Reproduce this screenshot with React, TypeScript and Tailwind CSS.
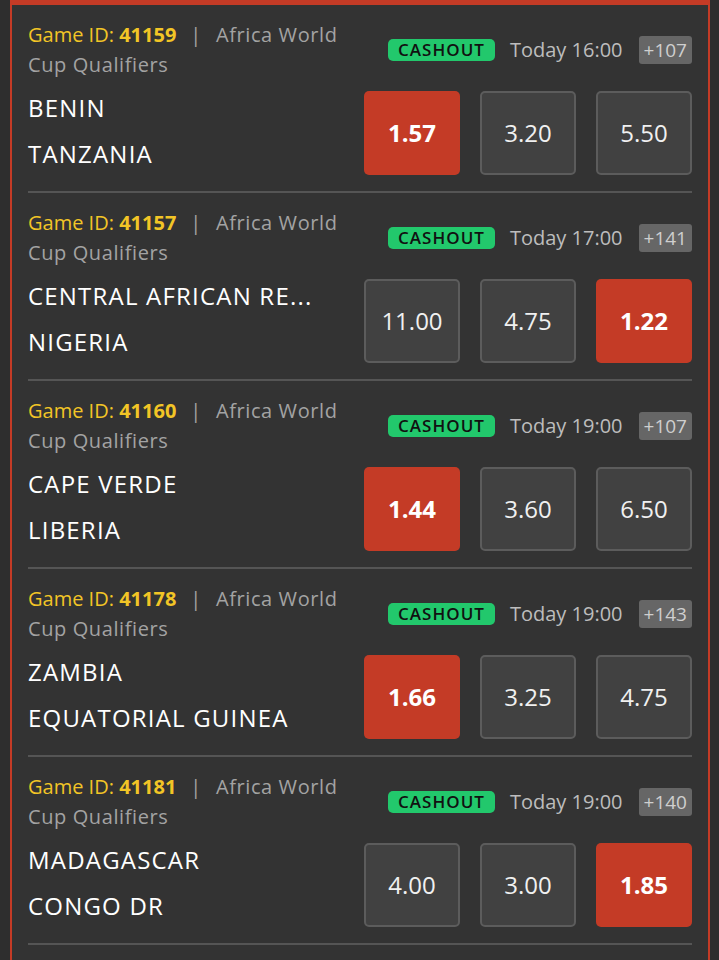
import React from "react";

type Match = {
  id: string;
  league: string;
  time: string;
  more: string;
  home: string;
  away: string;
  odds: string[];
  pick: number;
};

const matches: Match[] = [
  { id: "41159", league: "Africa World Cup Qualifiers", time: "Today 16:00", more: "+107", home: "BENIN", away: "TANZANIA", odds: ["1.57", "3.20", "5.50"], pick: 0 },
  { id: "41157", league: "Africa World Cup Qualifiers", time: "Today 17:00", more: "+141", home: "CENTRAL AFRICAN RE...", away: "NIGERIA", odds: ["11.00", "4.75", "1.22"], pick: 2 },
  { id: "41160", league: "Africa World Cup Qualifiers", time: "Today 19:00", more: "+107", home: "CAPE VERDE", away: "LIBERIA", odds: ["1.44", "3.60", "6.50"], pick: 0 },
  { id: "41178", league: "Africa World Cup Qualifiers", time: "Today 19:00", more: "+143", home: "ZAMBIA", away: "EQUATORIAL GUINEA", odds: ["1.66", "3.25", "4.75"], pick: 0 },
  { id: "41181", league: "Africa World Cup Qualifiers", time: "Today 19:00", more: "+140", home: "MADAGASCAR", away: "CONGO DR", odds: ["4.00", "3.00", "1.85"], pick: 2 },
];

function MatchRow({ m }: { m: Match }) {
  return (
    <div className="border-b-2 border-[#555555] pt-[15px] pb-[14px]">
      <div className="flex items-center gap-3">
        <div className="flex-1 text-[20px] leading-[30px] tracking-[0.03em] text-[#a3a3a3]">
          <span className="tracking-normal text-[#f2c526]">
            Game ID: <b className="font-bold">{m.id}</b>
          </span>
          <span className="px-[14px]">|</span>
          {m.league}
        </div>
        <div className="flex shrink-0 items-center">
          <span className="rounded-[5px] bg-[#22c86c] px-[10px] text-[17px] font-semibold leading-[22px] tracking-[0.06em] text-[#111111]">
            CASHOUT
          </span>
          <span className="ml-[15px] text-[20px] text-[#bdbdbd]">{m.time}</span>
          <span className="ml-[16px] rounded-[3px] bg-[#666666] px-[5px] text-[19px] leading-[28px] text-[#cfcfcf]">
            {m.more}
          </span>
        </div>
      </div>
      <div className="mt-[5px] flex items-center">
        <div className="min-w-0 flex-1 text-[24px] font-medium leading-[46px] tracking-[0.05em] text-white">
          <div className="whitespace-nowrap">{m.home}</div>
          <div className="whitespace-nowrap">{m.away}</div>
        </div>
        <div className="flex gap-[20px] pt-[3px]">
          {m.odds.map((o, i) =>
            i === m.pick ? (
              <div
                key={i}
                className="flex h-[84px] w-[96px] items-center justify-center rounded-[5px] bg-[#c43b26] text-[24px] font-bold text-white"
              >
                {o}
              </div>
            ) : (
              <div
                key={i}
                className="flex h-[84px] w-[96px] items-center justify-center rounded-[5px] border-2 border-[#5c5c5c] bg-[#414141] text-[24px] text-[#f0f0f0]"
              >
                {o}
              </div>
            )
          )}
        </div>
      </div>
    </div>
  );
}

export default function App() {
  return (
    <div
      className="min-h-[960px] bg-[#2e2e2e] pl-[10px] pr-[9px]"
      style={{ fontFamily: '"Open Sans", "Liberation Sans", sans-serif' }}
    >
      <div className="min-h-[960px] border-x-2 border-t-[5px] border-[#c43b26] bg-[#333333] px-[16px]">
        {matches.map((m) => (
          <MatchRow key={m.id} m={m} />
        ))}
      </div>
    </div>
  );
}
